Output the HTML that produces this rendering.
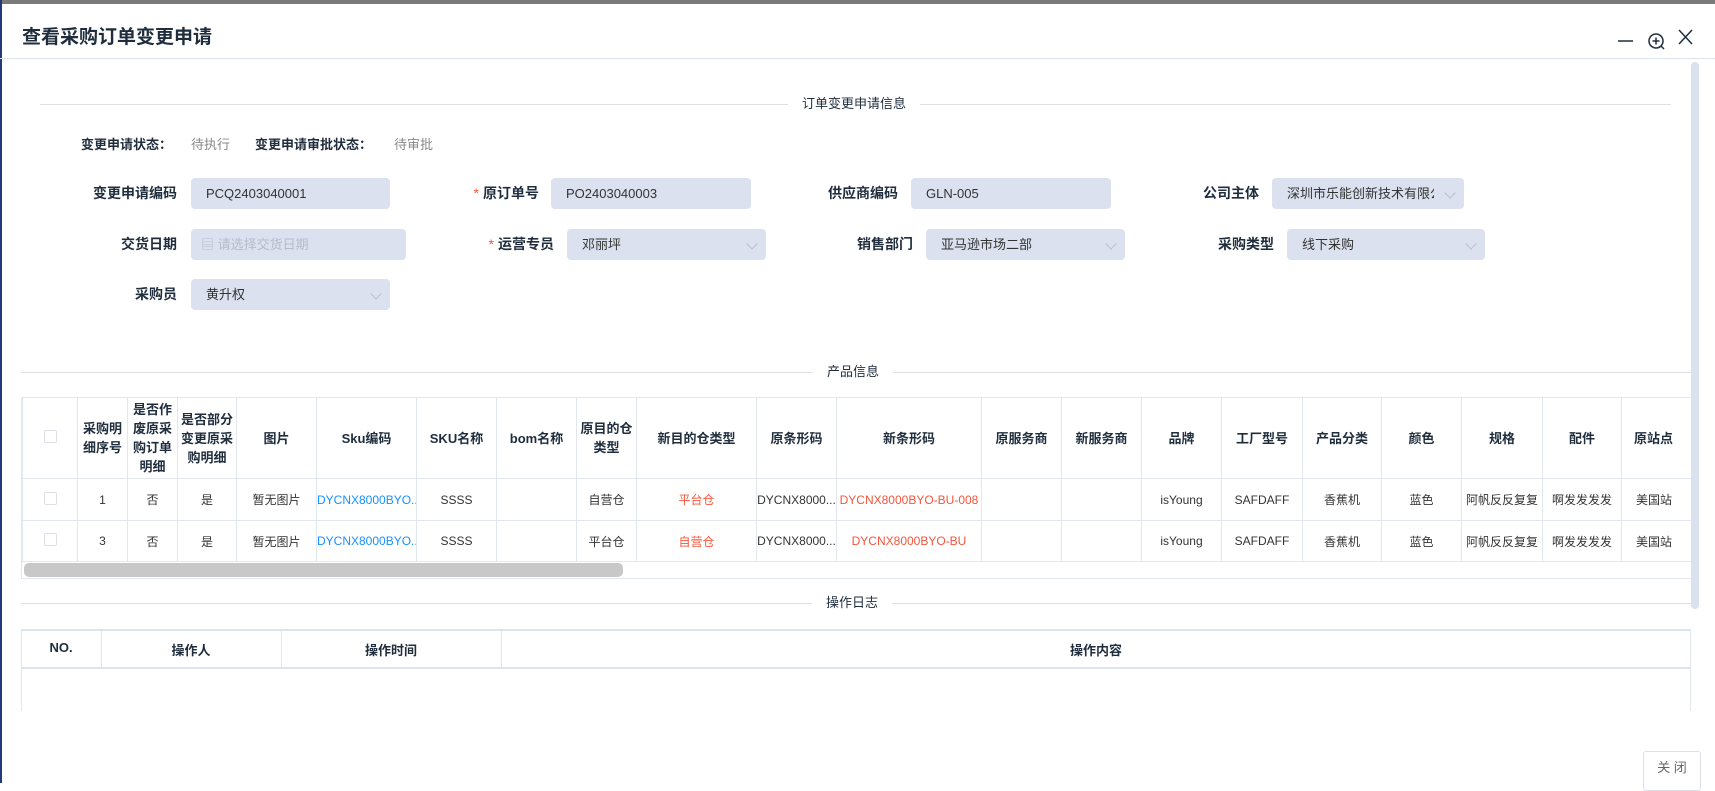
<!DOCTYPE html>
<html><head><meta charset="utf-8"><style>
*{box-sizing:border-box;margin:0;padding:0}
body{width:1715px;height:783px;overflow:hidden;background:#fff;font-family:"Liberation Sans","Noto Sans CJK SC",sans-serif;color:#333;position:relative}
.a{position:absolute}
.lbl{position:absolute;font-size:14px;color:#1f2d3d;text-align:right;line-height:31px;font-weight:bold}
.lbl b{color:#f5553b;font-weight:normal;margin-right:4px}
.inp{position:absolute;height:31px;background:#dbe1ee;border-radius:4px;font-size:13px;line-height:31px;padding-left:15px;color:#333;white-space:nowrap;overflow:hidden}
.arr{position:absolute;right:10px;top:11px;width:8px;height:8px;border-right:1px solid #b8bfcc;border-bottom:1px solid #b8bfcc;transform:rotate(45deg)}
.div{position:absolute;height:1px;background:#e0e0e0}
.dt{position:absolute;background:#fff;padding:0 14px;font-size:13px;color:#1f2d3d;line-height:18px}
table{border-collapse:collapse;table-layout:fixed}
td,th{border:1px solid #e1e6ef;text-align:center;font-size:12px;overflow:hidden;white-space:nowrap}
th{font-weight:bold;color:#1f2d3d;font-size:13px;white-space:normal;line-height:19px}
.bl{color:#1890ff}.rd{color:#f5553b}
.cb{display:inline-block;width:13px;height:13px;border:1px solid #dcdfe6;border-radius:2px}
</style></head><body>
<div class="a" style="left:0;top:0;width:1715px;height:4px;background:#7a7a7a"></div>
<div class="a" style="left:0;top:0;width:2px;height:783px;background:#223a7a"></div>
<div class="a" style="left:22px;top:22px;font-size:19px;font-weight:bold;color:#1f2d3d">查看采购订单变更申请</div>
<div class="a" style="left:0;top:58px;width:1715px;height:1px;background:#dbe4ef"></div>
<svg class="a" style="left:1616px;top:26px" width="90" height="26" viewBox="0 0 90 26" fill="none" stroke="#1f2d3d" stroke-width="1.5">
<line x1="2" y1="15" x2="17" y2="15"/>
<circle cx="40" cy="15" r="7"/><line x1="40" y1="11.5" x2="40" y2="18.5"/><line x1="36.5" y1="15" x2="43.5" y2="15"/><line x1="45" y1="20" x2="48" y2="23"/>
<line x1="63" y1="4" x2="76" y2="18"/><line x1="76" y1="4" x2="63" y2="18"/>
</svg>
<div class="a" style="left:1691px;top:62px;width:8px;height:547px;background:#dbe1ee;border-radius:4px"></div>

<div class="div" style="left:40px;top:104px;width:1631px"></div>
<div class="dt" style="left:788px;top:95px">订单变更申请信息</div>

<div class="a" style="left:81px;top:134px;font-size:13px;color:#1f2d3d;font-weight:bold">变更申请状态：</div>
<div class="a" style="left:191px;top:134px;font-size:13px;color:#888">待执行</div>
<div class="a" style="left:255px;top:134px;font-size:13px;color:#1f2d3d;font-weight:bold">变更申请审批状态：</div>
<div class="a" style="left:394px;top:134px;font-size:13px;color:#888">待审批</div>

<div class="lbl" style="right:1538px;top:178px">变更申请编码</div>
<div class="inp" style="left:191px;top:178px;width:199px">PCQ2403040001</div>
<div class="lbl" style="right:1176px;top:178px"><b>*</b>原订单号</div>
<div class="inp" style="left:551px;top:178px;width:200px">PO2403040003</div>
<div class="lbl" style="right:817px;top:178px">供应商编码</div>
<div class="inp" style="left:911px;top:178px;width:200px">GLN-005</div>
<div class="lbl" style="right:456px;top:178px">公司主体</div>
<div class="inp" style="left:1272px;top:178px;width:192px"><span style="display:inline-block;width:147px;overflow:hidden;vertical-align:top">深圳市乐能创新技术有限公司</span><span class="arr"></span></div>

<div class="lbl" style="right:1538px;top:229px">交货日期</div>
<div class="inp" style="left:191px;top:229px;width:215px;color:#b4bccc;padding-left:10px">▤ 请选择交货日期</div>
<div class="lbl" style="right:1161px;top:229px"><b>*</b>运营专员</div>
<div class="inp" style="left:567px;top:229px;width:199px">邓丽坪<span class="arr"></span></div>
<div class="lbl" style="right:802px;top:229px">销售部门</div>
<div class="inp" style="left:926px;top:229px;width:199px">亚马逊市场二部<span class="arr"></span></div>
<div class="lbl" style="right:441px;top:229px">采购类型</div>
<div class="inp" style="left:1287px;top:229px;width:198px">线下采购<span class="arr"></span></div>

<div class="lbl" style="right:1538px;top:279px">采购员</div>
<div class="inp" style="left:191px;top:279px;width:199px">黄升权<span class="arr"></span></div>

<div class="div" style="left:21px;top:372px;width:1670px"></div>
<div class="dt" style="left:813px;top:363px">产品信息</div>

<div class="a" style="left:21px;top:397px;width:1670px;height:182px;overflow:hidden;border-left:1px solid #e1e6ef;border-bottom:1px solid #e1e6ef">
<table style="width:1690px">
<colgroup><col style="width:55px"><col style="width:50px"><col style="width:50px"><col style="width:59px"><col style="width:80px"><col style="width:100px"><col style="width:80px"><col style="width:80px"><col style="width:60px"><col style="width:120px"><col style="width:80px"><col style="width:145px"><col style="width:80px"><col style="width:80px"><col style="width:80px"><col style="width:81px"><col style="width:79px"><col style="width:80px"><col style="width:81px"><col style="width:79px"><col style="width:91px"></colgroup>
<tr style="height:81px"><th><span class="cb"></span></th><th>采购明细序号</th><th>是否作废原采购订单明细</th><th>是否部分变更原采购明细</th><th>图片</th><th>Sku编码</th><th>SKU名称</th><th>bom名称</th><th>原目的仓类型</th><th>新目的仓类型</th><th>原条形码</th><th>新条形码</th><th>原服务商</th><th>新服务商</th><th>品牌</th><th>工厂型号</th><th>产品分类</th><th>颜色</th><th>规格</th><th>配件</th><th style="text-align:left;padding-left:12px">原站点</th></tr>
<tr style="height:42px"><td><span class="cb"></span></td><td>1</td><td>否</td><td>是</td><td>暂无图片</td><td class="bl">DYCNX8000BYO...</td><td>SSSS</td><td></td><td>自营仓</td><td class="rd">平台仓</td><td>DYCNX8000...</td><td class="rd">DYCNX8000BYO-BU-008</td><td></td><td></td><td>isYoung</td><td>SAFDAFF</td><td>香蕉机</td><td>蓝色</td><td>阿帆反反复复</td><td>啊发发发发</td><td style="text-align:left;padding-left:14px">美国站</td></tr>
<tr style="height:41px"><td><span class="cb"></span></td><td>3</td><td>否</td><td>是</td><td>暂无图片</td><td class="bl">DYCNX8000BYO...</td><td>SSSS</td><td></td><td>平台仓</td><td class="rd">自营仓</td><td>DYCNX8000...</td><td class="rd">DYCNX8000BYO-BU</td><td></td><td></td><td>isYoung</td><td>SAFDAFF</td><td>香蕉机</td><td>蓝色</td><td>阿帆反反复复</td><td>啊发发发发</td><td style="text-align:left;padding-left:14px">美国站</td></tr>
</table>
<div class="a" style="left:2px;top:166px;width:599px;height:14px;background:#c8c8c8;border-radius:5px"></div>
</div>

<div class="div" style="left:21px;top:603px;width:1670px"></div>
<div class="dt" style="left:812px;top:594px">操作日志</div>

<div class="a" style="left:21px;top:629px;width:1670px;height:82px;border:1px solid #e1e6ef;border-bottom:none;border-top:2px solid #dbe4ef"></div>
<div class="a" style="left:21px;top:667px;width:1670px;height:2px;background:#dbe4ef"></div>
<div class="a" style="left:101px;top:631px;width:1px;height:36px;background:#e1e6ef"></div>
<div class="a" style="left:281px;top:631px;width:1px;height:36px;background:#e1e6ef"></div>
<div class="a" style="left:501px;top:631px;width:1px;height:36px;background:#e1e6ef"></div>
<div class="a" style="left:21px;top:640px;width:80px;text-align:center;font-size:13px;font-weight:bold;color:#1f2d3d">NO.</div>
<div class="a" style="left:101px;top:640px;width:180px;text-align:center;font-size:13px;font-weight:bold;color:#1f2d3d">操作人</div>
<div class="a" style="left:281px;top:640px;width:220px;text-align:center;font-size:13px;font-weight:bold;color:#1f2d3d">操作时间</div>
<div class="a" style="left:501px;top:640px;width:1190px;text-align:center;font-size:13px;font-weight:bold;color:#1f2d3d">操作内容</div>

<div class="a" style="left:1643px;top:751px;width:58px;height:40px;border:1px solid #dcdfe6;border-radius:3px;font-size:13px;color:#666;text-align:center;line-height:32px">关 闭</div>
</body></html>
